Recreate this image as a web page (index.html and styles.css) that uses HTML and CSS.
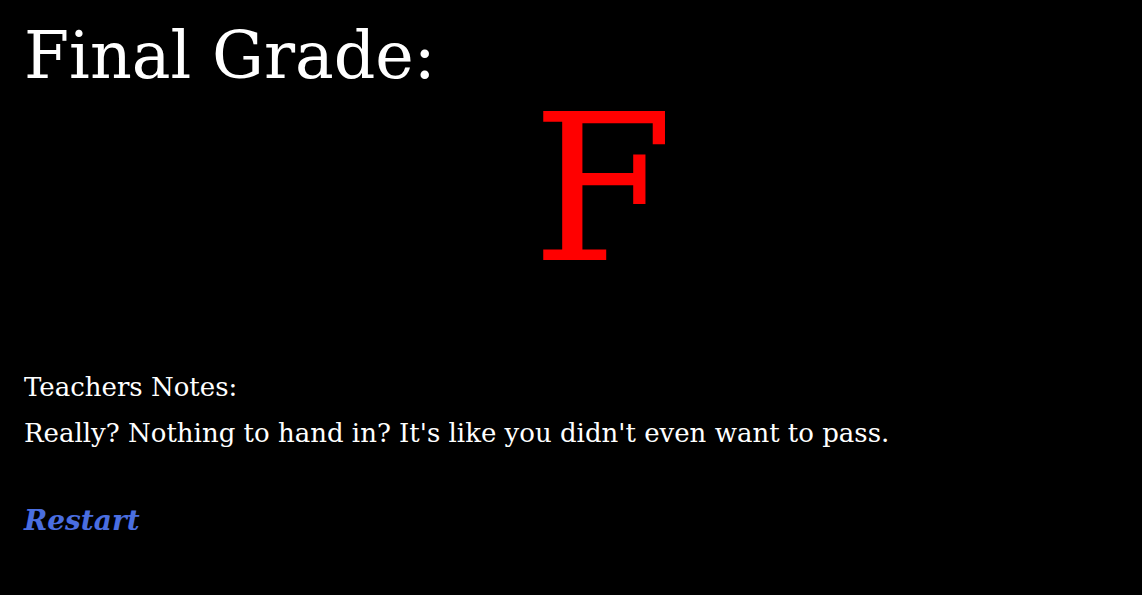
FILE: index.html
```html
<!DOCTYPE html>
<html>
<head>
<meta charset="utf-8">
<link rel="stylesheet" href="styles.css">
</head>
<body>
<main class="page">
  <h1 class="title">Final Grade:</h1>
  <div class="grade">F</div>
  <section class="notes">
    <p class="notes-label">Teachers Notes:</p>
    <p class="notes-text">Really? Nothing to hand in? It's like you didn't even want to pass.</p>
  </section>
  <a class="restart" href="#">Restart</a>
</main>
</body>
</html>
```

FILE: styles.css
```css
html, body {
  margin: 0;
  padding: 0;
  background: #000;
  color: #fff;
  font-family: "DejaVu Serif", "Liberation Serif", serif;
}
.page {
  padding: 16px 24px 0 24px;
  display: flex;
  flex-direction: column;
  align-items: flex-start;
}
.title {
  margin: 0;
  font-size: 65px;
  font-weight: normal;
  line-height: 80px;
}
.grade {
  align-self: stretch;
  color: #f00;
  font-size: 204px;
  line-height: 188px;
  padding-left: 508px;
}
.notes { margin-top: 80px; }
.notes p { margin: 0; font-size: 26px; line-height: 46px; }
.restart {
  margin-top: 48px;
  color: #4a6ee0;
  font-weight: bold;
  font-style: italic;
  font-size: 28px;
  text-decoration: none;
}
```
